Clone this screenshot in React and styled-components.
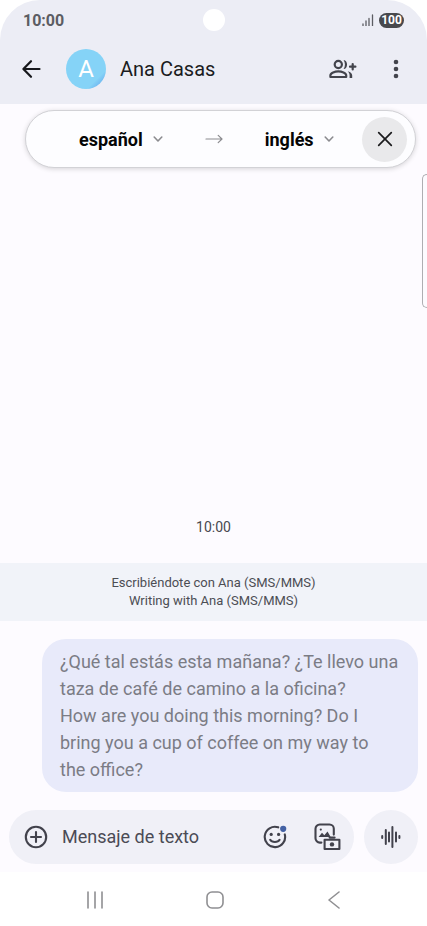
import React, { useState } from "react";
import styled, { createGlobalStyle } from "styled-components";

const GlobalStyle = createGlobalStyle`
  * {
    box-sizing: border-box;
  }

  body {
    margin: 0;
    background-color: #ffffff;
    font-family: Roboto, "Liberation Sans", sans-serif;
  }

  button {
    display: flex;
    flex: none;
    align-items: center;
    justify-content: center;
    padding: 0;
    border: none;
    background: none;
    color: inherit;
    cursor: pointer;
  }

  svg {
    display: block;
    flex: none;
    fill: none;
    stroke: currentColor;
    stroke-linecap: round;
    stroke-linejoin: round;
  }
`;

const Screen = styled.div`
  display: flex;
  flex-direction: column;
  min-height: 100vh;
`;

const Header = styled.header`
  background-color: #ecedf5;
  border-radius: 40px 40px 0 0;
  padding-bottom: 6px;
`;

const StatusBar = styled.div`
  display: grid;
  grid-template-columns: 1fr auto 1fr;
  align-items: center;
  height: 40px;
  padding: 0 23px;
  color: #5c5d63;
`;

const Clock = styled.span`
  font-size: 16px;
  font-weight: bold;
`;

const Camera = styled.span`
  width: 22px;
  height: 22px;
  border-radius: 50%;
  background-color: #ffffff;
`;

const Signals = styled.div`
  display: flex;
  align-items: center;
  justify-content: flex-end;
  gap: 5px;
`;

const Battery = styled.span`
  width: 25px;
  border-radius: 8px;
  background-color: #48494d;
  color: #ffffff;
  font-size: 12px;
  font-weight: bold;
  line-height: 15px;
  text-align: center;
`;

const AppBar = styled.div`
  display: flex;
  align-items: center;
  height: 58px;
  padding: 0 20px;
  color: #43444c;
`;

const BackButton = styled.button`
  width: 22px;
  height: 40px;
  margin-right: 24px;
  color: #17181c;
`;

const Avatar = styled.span`
  width: 40px;
  height: 40px;
  margin-right: 14px;
  border-radius: 50%;
  background: linear-gradient(135deg, #85d3f7 76%, #76bff2 84%);
  color: #ffffff;
  font-size: 24px;
  line-height: 41px;
  text-align: center;
`;

const Contact = styled.h1`
  flex: 1;
  margin: 0;
  color: #1b1c21;
  font-size: 20px;
  font-weight: normal;
`;

const BarButton = styled.button`
  width: ${(props) => props.$width};
  height: 40px;
  margin-left: 28px;
`;

const Conversation = styled.main`
  position: relative;
  flex: 1;
  display: flex;
  flex-direction: column;
  background-color: #fdfbff;
`;

const Translator = styled.div`
  display: flex;
  align-items: center;
  gap: 42px;
  height: 58px;
  margin: 6px 11px 0 25px;
  padding: 0 8px 0 53px;
  border: 1px solid #d2d2d6;
  border-radius: 29px;
  background-color: #fdfdff;
  box-shadow: 0 1px 5px rgba(0, 0, 0, 0.16);
  color: #8b8b8f;
`;

const Language = styled.label`
  display: flex;
  align-items: center;
  gap: 10px;
`;

const LanguageSelect = styled.select`
  appearance: none;
  field-sizing: content;
  padding: 0;
  border: none;
  background: none;
  color: #050505;
  font-family: inherit;
  font-size: 18px;
  font-weight: bold;
  cursor: pointer;
`;

const CloseButton = styled.button`
  width: 45px;
  height: 45px;
  margin-left: auto;
  border-radius: 50%;
  background-color: #e9e9eb;
  color: #1b1b1d;
`;

const TranslatorEnd = styled.div`
  flex: 1;
  display: flex;
  align-items: center;
`;

// handle of the side panel, sits over the conversation
const EdgeHandle = styled.div`
  position: absolute;
  top: 70px;
  right: 0;
  width: 5px;
  height: 134px;
  border: 1px solid #aeaeb2;
  border-right: none;
  border-radius: 6px 0 0 6px;
`;

const Messages = styled.section`
  flex: 1;
  display: flex;
  flex-direction: column;
  justify-content: flex-end;
`;

const Time = styled.time`
  margin-bottom: 27px;
  color: #48494f;
  font-size: 14px;
  line-height: 18px;
  text-align: center;
`;

const Notice = styled.div`
  padding: 11px 16px;
  background-color: #f1f3f9;
  color: #4c4d54;
  font-size: 13px;
  line-height: 18px;
  text-align: center;
`;

const Line = styled.p`
  margin: 0;
`;

const Bubble = styled.div`
  margin: 18px 9px 18px 42px;
  padding: 9px 16px 9px 18px;
  border-radius: 24px;
  background-color: #e8eafa;
  color: #7b7c85;
  font-size: 18px;
  line-height: 27px;
`;

const Composer = styled.form`
  display: flex;
  gap: 10px;
  padding: 0 9px 8px;
  color: #42424c;
`;

const Field = styled.div`
  flex: 1;
  display: flex;
  align-items: center;
  min-width: 0;
  height: 54px;
  padding: 0 13px 0 15px;
  border-radius: 27px;
  background-color: #f0f0f7;
`;

const TextInput = styled.input`
  flex: 1;
  min-width: 0;
  height: 24px;
  margin: 0 14px 2px;
  padding: 0;
  border: none;
  outline: none;
  background: none;
  color: #42424c;
  font-family: inherit;
  font-size: 18px;

  &::placeholder {
    color: #4b4b55;
    opacity: 1;
  }
`;

const MediaButton = styled.button`
  margin-left: 27px;
`;

const VoiceButton = styled.button`
  width: 54px;
  height: 54px;
  border-radius: 50%;
  background-color: #f0f0f7;
`;

const NavBar = styled.nav`
  display: flex;
  align-items: center;
  justify-content: space-between;
  height: 54px;
  padding: 2px 82px 0 84px;
  background-color: #ffffff;
  color: #8f8f92;
`;

const NavButton = styled.button`
  width: 22px;
  height: 40px;
`;

const SignalIcon = () => (
  <svg width="12" height="12" strokeWidth="1.3" strokeLinecap="butt">
    <path d="M1 10v2M4 7v5M7 4.5v7.5M10.5 1v11" />
  </svg>
);

const BackIcon = () => (
  <svg width="20" height="20" strokeWidth="2.2">
    <path d="M18.5 10H3M10 2.2L2.4 10L10 17.8" />
  </svg>
);

const AddPeopleIcon = () => (
  <svg width="28" height="20" strokeWidth="2.2">
    <circle cx="9.3" cy="5.5" r="3.6" />
    <path d="M1.4 18v-1.7c0-2.5 4.6-3.9 7.9-3.9s7.9 1.4 7.9 3.9V18z" />
    <path
      d="M14.6 .9c4.6 .4 4.6 8.8 0 9.2c1.8-2.6 1.8-6.6 0-9.2z"
      fill="currentColor"
      stroke="none"
    />
    <path
      d="M18.8 12.2c3 .8 4.4 2.2 4.4 4.4v2.5h-2.6v-2.5c0-1.9-.6-3.3-1.8-4.4z"
      fill="currentColor"
      stroke="none"
    />
    <path d="M23.7 5v5.4M21 7.7h5.4" />
  </svg>
);

const MoreIcon = () => (
  <svg width="6" height="20">
    <g fill="currentColor" stroke="none">
      <circle cx="3" cy="3" r="2.3" />
      <circle cx="3" cy="10" r="2.3" />
      <circle cx="3" cy="17" r="2.3" />
    </g>
  </svg>
);

const ChevronIcon = () => (
  <svg width="10" height="8" strokeWidth="1.6">
    <path d="M1.2 2L5 6L8.8 2" />
  </svg>
);

const ArrowIcon = () => (
  <svg width="18" height="10" strokeWidth="1.2">
    <path d="M1 5h16M13.2 1.4L17 5l-3.8 3.6" />
  </svg>
);

const CloseIcon = () => (
  <svg width="16" height="16" strokeWidth="1.7">
    <path d="M1.7 1.7l12.6 12.6M14.3 1.7L1.7 14.3" />
  </svg>
);

const PlusIcon = () => (
  <svg width="24" height="24" strokeWidth="2.1">
    <circle cx="12" cy="12" r="10.2" />
    <path d="M12 7v10M7 12h10" />
  </svg>
);

const EmojiIcon = () => (
  <svg width="24" height="24" strokeWidth="2.1">
    <path d="M15.2 2.3A10.2 10.2 0 1 0 21.8 9.4" />
    <path d="M7.2 14.8c1.7 3 7.7 3 9.4 0" />
    <circle cx="8.2" cy="9.4" r="1.6" fill="currentColor" stroke="none" />
    <circle cx="15.6" cy="9.4" r="1.6" fill="currentColor" stroke="none" />
    <circle cx="20.2" cy="3.8" r="3.1" fill="#4461a4" stroke="none" />
  </svg>
);

const GalleryIcon = () => (
  <svg width="27" height="28" strokeWidth="2.1">
    <path d="M7.4 19.6H5.8A4.3 4.3 0 0 1 1.5 15.3V5.8A4.3 4.3 0 0 1 5.8 1.5H15.5A4.3 4.3 0 0 1 19.8 5.8V11.6" />
    <circle cx="6.8" cy="6.6" r="1.1" fill="currentColor" stroke="none" />
    <path
      d="M4.6 14l3.4-4.2l2.3 2.4l3.2-3.8l3.2 5.6z"
      fill="currentColor"
      stroke="none"
    />
    <path d="M10.6 16.8h14.8v9.2H10.6z" />
    <path d="M15.6 14.6h5" />
    <circle cx="18" cy="21.4" r="2.2" fill="currentColor" stroke="none" />
  </svg>
);

const VoiceIcon = () => (
  <svg width="22" height="24" strokeWidth="2">
    <path d="M2.2 11v2M5.8 5v14M9 7.5v9M12.4 2v20M16 7.5v9M19.4 11v2" />
  </svg>
);

const RecentsIcon = () => (
  <svg width="18" height="18" strokeWidth="1.6">
    <path d="M2 1v16M9 1v16M16 1v16" />
  </svg>
);

const HomeIcon = () => (
  <svg width="18" height="18" strokeWidth="1.6">
    <rect x="1" y="1" width="16" height="16" rx="5" />
  </svg>
);

const NavBackIcon = () => (
  <svg width="14" height="18" strokeWidth="1.6">
    <path d="M12 1L2 9l10 8" />
  </svg>
);

const LanguagePicker = ({ label, value, onChange }) => (
  <Language>
    <LanguageSelect
      aria-label={label}
      value={value}
      onChange={(e) => onChange(e.target.value)}
    >
      <option value="es">español</option>
      <option value="en">inglés</option>
    </LanguageSelect>
    <ChevronIcon />
  </Language>
);

const App = () => {
  const [source, setSource] = useState("es");
  const [target, setTarget] = useState("en");
  const [text, setText] = useState("");

  return (
    <Screen>
      <GlobalStyle />
      <Header>
        <StatusBar>
          <Clock>10:00</Clock>
          <Camera />
          <Signals>
            <SignalIcon />
            <Battery>100</Battery>
          </Signals>
        </StatusBar>
        <AppBar>
          <BackButton aria-label="Atrás">
            <BackIcon />
          </BackButton>
          <Avatar>A</Avatar>
          <Contact>Ana Casas</Contact>
          <BarButton $width="28px" aria-label="Añadir personas">
            <AddPeopleIcon />
          </BarButton>
          <BarButton $width="22px" aria-label="Más opciones">
            <MoreIcon />
          </BarButton>
        </AppBar>
      </Header>
      <Conversation>
        <Translator>
          <LanguagePicker
            label="Idioma de origen"
            value={source}
            onChange={setSource}
          />
          <ArrowIcon />
          <TranslatorEnd>
            <LanguagePicker
              label="Idioma de destino"
              value={target}
              onChange={setTarget}
            />
            <CloseButton aria-label="Cerrar">
              <CloseIcon />
            </CloseButton>
          </TranslatorEnd>
        </Translator>
        <EdgeHandle />
        <Messages>
          <Time>10:00</Time>
          <Notice>
            <Line>Escribiéndote con Ana (SMS/MMS)</Line>
            <Line>Writing with Ana (SMS/MMS)</Line>
          </Notice>
          <Bubble>
            <Line>
              ¿Qué tal estás esta mañana? ¿Te llevo una taza de café de camino a
              la oficina?
            </Line>
            <Line>
              How are you doing this morning? Do I bring you a cup of coffee on
              my way to the&nbsp;office?
            </Line>
          </Bubble>
        </Messages>
        <Composer onSubmit={(e) => e.preventDefault()}>
          <Field>
            <button type="button" aria-label="Adjuntar">
              <PlusIcon />
            </button>
            <TextInput
              aria-label="Mensaje de texto"
              placeholder="Mensaje de texto"
              value={text}
              onChange={(e) => setText(e.target.value)}
            />
            <button type="button" aria-label="Emojis">
              <EmojiIcon />
            </button>
            <MediaButton type="button" aria-label="Galería">
              <GalleryIcon />
            </MediaButton>
          </Field>
          <VoiceButton type="button" aria-label="Mensaje de voz">
            <VoiceIcon />
          </VoiceButton>
        </Composer>
      </Conversation>
      <NavBar>
        <NavButton aria-label="Recientes">
          <RecentsIcon />
        </NavButton>
        <NavButton aria-label="Inicio">
          <HomeIcon />
        </NavButton>
        <NavButton aria-label="Volver">
          <NavBackIcon />
        </NavButton>
      </NavBar>
    </Screen>
  );
};

export default App;
